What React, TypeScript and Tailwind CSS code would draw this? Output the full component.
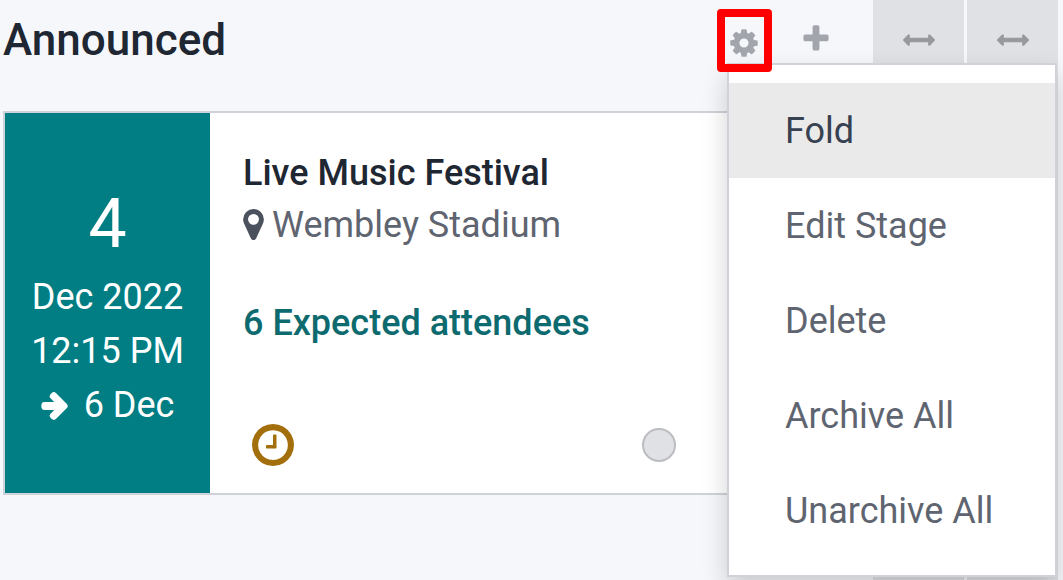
import type { ReactNode } from "react";

const ICONS = {
  gear: "M1152 896q0-106-75-181t-181-75-181 75-75 181 75 181 181 75 181-75 75-181zm512-109v222q0 12-8 23t-20 13l-185 28q-19 54-39 91 35 50 107 138 10 12 10 25t-9 23q-27 37-99 108t-94 71q-12 0-26-9l-138-108q-44 23-91 38-16 136-29 186-7 28-36 28h-222q-14 0-24.5-8.5t-11.5-21.5l-28-184q-49-16-90-37l-141 107q-10 9-25 9-14 0-25-11-126-114-165-168-7-10-7-23 0-12 8-23 15-21 51-66.5t54-70.5q-27-50-41-99l-183-27q-13-2-21-12.5t-8-23.5v-222q0-12 8-23t19-13l186-28q14-46 39-92-40-57-107-138-10-12-10-24 0-10 9-23 26-36 98.5-107.5t94.5-71.5q13 0 26 10l138 107q44-23 91-38 16-136 29-186 7-28 36-28h222q14 0 24.5 8.5t11.5 21.5l28 184q49 16 90 37l142-107q9-9 24-9 13 0 25 10 129 119 165 170 7 8 7 22 0 12-8 23-15 21-51 66.5t-54 70.5q26 50 41 98l183 28q13 2 21 12.5t8 23.5z",
  plus: "M1600 736v192q0 40-28 68t-68 28h-416v416q0 40-28 68t-68 28h-192q-40 0-68-28t-28-68v-416h-416q-40 0-68-28t-28-68v-192q0-40 28-68t68-28h416v-416q0-40 28-68t68-28h192q40 0 68 28t28 68v416h416q40 0 68 28t28 68z",
  unfold:
    "M1792 896q0 26-19 45l-256 256q-19 19-45 19t-45-19-19-45v-128h-1024v128q0 26-19 45t-45 19-45-19l-256-256q-19-19-19-45t19-45l256-256q19-19 45-19t45 19 19 45v128h1024v-128q0-26 19-45t45-19 45 19l256 256q19 19 19 45z",
  marker:
    "M1166 640a270 270 0 1 0-540 0a270 270 0 1 0 540 0zm242 0q0 109-33 179l-350 774q-16 33-55 52t-74 19-74-19-54-52l-351-774q-33-70-33-179 0-212 150-362t362-150 362 150 150 362z",
  clock:
    "M1024 544v448q0 14-9 23t-23 9h-320q-14 0-23-9t-9-23v-64q0-14 9-23t23-9h224v-352q0-14 9-23t23-9h64q14 0 23 9t9 23zm416 352q0-148-73-273t-198-198-273-73-273 73-198 198-73 273 73 273 198 198 273 73 273-73 198-198 73-273zm224 0q0 209-103 385.5t-279.5 279.5-385.5 103-385.5-103-279.5-279.5-103-385.5 103-385.5 279.5-279.5 385.5-103 385.5 103 279.5 279.5 103 385.5z",
  arrow:
    "M1600 960q0 54-37 91l-651 651q-39 37-91 37-51 0-90-37l-75-75q-38-38-38-91t38-91l293-293h-704q-52 0-84.5-37.5t-32.5-90.5v-128q0-53 32.5-90.5t84.5-37.5h704l-293-294q-38-36-38-90t38-90l75-75q38-38 90-38 53 0 91 38l651 651q37 35 37 90z",
};

function Icon({
  name,
  className,
  viewBox = "0 0 1792 1792",
}: {
  name: keyof typeof ICONS;
  className: string;
  viewBox?: string;
}) {
  return (
    <svg viewBox={viewBox} fill="currentColor" aria-hidden="true" className={className}>
      <path d={ICONS[name]} />
    </svg>
  );
}

function MenuItem({ active = false, children }: { active?: boolean; children: ReactNode }) {
  return (
    <button
      type="button"
      role="menuitem"
      className={
        active
          ? "block w-full bg-[#eaeaea] pt-[21px] pb-[19px] pl-14 text-left text-[36px] leading-[55px] text-[#374151]"
          : "block w-full pt-[21px] pb-[19px] pl-14 text-left text-[36px] leading-[55px] text-[#5f6570] hover:bg-[#eaeaea]"
      }
    >
      {children}
    </button>
  );
}

function StageMenu() {
  return (
    <div
      role="menu"
      aria-label="Stage settings"
      className="absolute top-[54px] left-[10px] z-10 w-[330px] border-2 border-[#cfd2d8] bg-white pt-[18px] pb-[17px] shadow-[0_12px_24px_rgba(0,0,0,0.18)]"
    >
      <MenuItem active>Fold</MenuItem>
      <MenuItem>Edit Stage</MenuItem>
      <MenuItem>Delete</MenuItem>
      <MenuItem>Archive All</MenuItem>
      <MenuItem>Unarchive All</MenuItem>
    </div>
  );
}

function EventCard() {
  return (
    <article className="flex border-2 border-[#cfd2d8] bg-white text-[36px]">
      <div className="w-[205px] shrink-0 bg-[#017e84] pt-[69px] pb-[61px] text-center leading-[54px] text-white">
        <p className="mb-1 text-[68px] leading-[84px]">4</p>
        <p>Dec 2022</p>
        <p>12:15 PM</p>
        <p className="flex items-center justify-center gap-4">
          <Icon
            name="arrow"
            viewBox="60 20 1600 1760"
            className="h-[30px] w-[27px] stroke-current stroke-[90]"
          />
          6 Dec
        </p>
      </div>
      <div className="flex flex-1 flex-col pt-[34px] pr-8 pb-[27px] pl-[33px] leading-[52px]">
        <h2 className="font-medium text-[#1f2733]">Live Music Festival</h2>
        <p className="flex items-center gap-2 text-[#5f6570]">
          <Icon
            name="marker"
            viewBox="384 128 1024 1632"
            className="h-[33px] w-[21px] text-[#4b525d]"
          />
          Wembley Stadium
        </p>
        <a href="#attendees" className="mt-[46px] self-start font-medium text-[#0d6b70]">
          6 Expected attendees
        </a>
        <div className="mt-auto flex items-center pl-[9px]">
          <button type="button" aria-label="Schedule activity" className="text-[#a36f0c]">
            <Icon name="clock" viewBox="128 128 1536 1536" className="block size-[42px]" />
          </button>
          <button
            type="button"
            aria-label="Kanban state"
            className="ml-[348px] size-[34px] rounded-full border-2 border-[#bbbdc1] bg-[#dfe1e5]"
          />
        </div>
      </div>
    </article>
  );
}

function FoldedColumn({ label }: { label: string }) {
  return (
    <section aria-label={label} className="w-[91px] bg-[#e0e1e5] pt-6">
      <button type="button" aria-label="Unfold" className="block w-full text-[#96999e]">
        <Icon name="unfold" className="mx-auto size-8" />
      </button>
    </section>
  );
}

export default function App() {
  return (
    <main className="flex min-h-screen gap-[3px] overflow-hidden bg-[#f5f7fb] pr-[5px] font-['Roboto',sans-serif]">
      <section className="min-w-0 flex-1 pr-4 pl-[3px]">
        <header className="flex h-[111px] items-start">
          <h1 className="flex-1 text-[44px] leading-[80px] font-medium text-[#1f2733]">Announced</h1>
          <div className="relative mt-[9px] flex">
            <button
              type="button"
              aria-label="Settings"
              aria-haspopup="menu"
              className="relative z-20 flex h-[63px] w-[55px] items-center justify-center rounded-[4px] border-8 border-[#ff0000] pt-1 pr-[2px] text-[#a2a6ac]"
            >
              <Icon name="gear" className="size-8 shrink-0" />
            </button>
            <button
              type="button"
              aria-label="Quick add"
              className="mr-[22px] ml-7 flex h-[60px] w-8 items-center justify-center text-[#a2a6ac]"
            >
              <Icon name="plus" className="size-8" />
            </button>
            <StageMenu />
          </div>
        </header>
        <EventCard />
      </section>
      <FoldedColumn label="Folded stage 1" />
      <FoldedColumn label="Folded stage 2" />
    </main>
  );
}
